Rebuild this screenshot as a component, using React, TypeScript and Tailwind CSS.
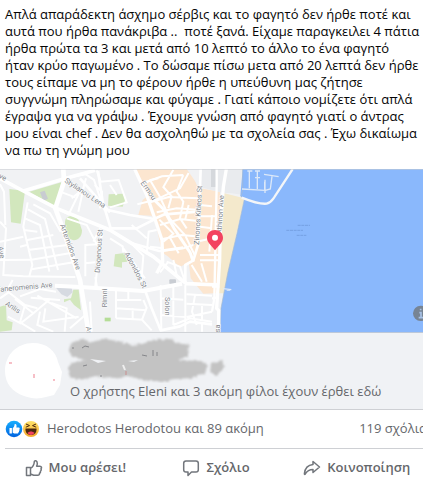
import type { ReactNode } from "react";

const reviewLines = [
    "Απλά απαράδεκτη άσχημο σέρβις και το φαγητό δεν ήρθε ποτέ και",
    "αυτά που ήρθα πανάκριβα ..  ποτέ ξανά. Είχαμε παραγκειλει 4 πάτια",
    "ήρθα πρώτα τα 3 και μετά από 10 λεπτό το άλλο το ένα φαγητό",
    "ήταν κρύο παγωμένο . Το δώσαμε πίσω μετα από 20 λεπτά δεν ήρθε",
    "τους είπαμε να μη το φέρουν ήρθε η υπεύθυνη μας ζήτησε",
    "συγγνώμη πληρώσαμε και φύγαμε . Γιατί κάποιο νομίζετε ότι απλά",
    "έγραψα για να γράψω . Έχουμε γνώση από φαγητό γιατί ο άντρας",
    "μου είναι chef . Δεν θα ασχοληθώ με τα σχολεία σας . Έχω δικαίωμα",
    "να πω τη γνώμη μου",
];

function StreetMap() {
    return (
        <svg viewBox="0 12 1269 492" className="block w-full" role="img" aria-label="Map">
            <rect y="12" width="1269" height="492" fill="#f1f2f4" />

            {/* town centre */}
            <g fill="#fce6d0">
                <path d="M400 12H560L600 70L660 80V384L610 386L572 340L566 292L540 306L505 275L486 262L478 225L468 180L455 152L415 150L428 105L440 95L425 45Z" />
            </g>
            <path d="M560 12H598V80L575 20Z" fill="#f1f2f4" />
            <path d="M600 12H730V90L690 84H670L600 66Z" fill="#e9ebee" />
            <path d="M633 12H648V66H633Z" fill="#d5d8dc" />

            {/* parks */}
            <g fill="#d2e7bd">
                <path d="M28 72L75 78L62 176L33 172Z" />
                <path d="M88 80L184 52L168 126Z" />
                <path d="M195 172C195 150 222 148 236 166L246 196C246 224 222 232 207 220C196 208 195 190 195 172Z" />
                <path d="M326 88L369 86L376 103L368 125L324 122Z" />
                <path d="M345 268L374 264L382 290L366 292V308L341 304Z" />
                <path d="M220 374H236L243 436L222 420L210 404L192 412V403L213 400Z" />
                <path d="M0 425L18 419L20 466L38 472L35 496L0 500Z" />
                <path d="M314 458H332V469H314Z" fill="#b5dd97" />
            </g>
            <g fill="#d6dae1">
                <path d="M168 368L214 365L218 382L202 396L184 388Z" />
                <rect x="508" y="343" width="20" height="14" rx="3" fill="#c9cdd3" />
                <path d="M120 82L134 77L144 101L130 108Z" fill="#c8ccd1" />
            </g>

            {/* side streets */}
            <g fill="none" stroke="#fff" strokeWidth="6">
                <path d="M83 112L70 185L97 300L88 334M100 118L150 145L182 200M84 133L135 162L174 315M75 160L120 180L148 320M72 195L112 200M78 226L160 210M84 255L202 240M90 285L208 265M95 313L220 292M60 245L80 240M0 170L18 190L10 330L70 334L226 336" />
                <path d="M0 58L12 80L16 180M0 230L70 215M0 285L92 284M38 345L20 378M0 400L26 382L75 420L112 430M60 394L120 372L168 380M45 402L100 445L62 475L24 455M75 420L60 472L106 500M112 392L230 460M100 445L148 404M120 440L112 480L160 500M136 430L130 470L236 455M154 414L200 430L194 500M92 398L180 405M210 490L256 450" />
                <path d="M190 40L258 28L282 45L310 128M215 100L250 72L235 140M170 130L206 148L240 78M258 40L244 90M186 82L226 97M290 16L302 50L356 45L380 112L330 127M330 60L350 90M284 60L306 80L300 130" />
                <path d="M256 334V240L294 238M256 295L286 292M200 160L260 180L290 238L308 210M330 220L368 244L370 262M400 242L430 272L424 350M440 268L446 200L470 195M450 245L490 250M370 250L435 340M300 190L280 230" />
                <path d="M348 376V460M348 405H424M348 430L440 436M348 460L430 464M430 405L440 428L426 464L455 496M385 376V405M398 430V462M292 374L286 336M270 410L275 500M482 360L484 496M520 358V480M556 360V500M484 400L550 404M484 450L556 456M560 388L636 392M560 416L636 420M560 456L636 440M585 392L576 440L590 480M606 420V500M520 480L570 460L636 470" />
                <path d="M395 180L440 220M440 52L452 45L475 40M500 290L540 305L555 350M505 290L480 322M520 285L530 330" />
            </g>

            {/* streets of the centre */}
            <g fill="none" stroke="#fff" strokeWidth="6">
                <path d="M430 54L486 34L550 30M412 118L468 104L540 70L566 24M450 112L506 96L594 100M470 142L530 130L590 134M480 180L540 162L594 168M488 222L545 210L585 214M450 45L480 96L510 162L555 210L584 270M520 14L490 66L515 94L505 130M550 30L530 80L550 110L540 160L560 190M566 120L556 162M478 164L520 206L490 230M486 258L550 250L580 240M510 218L536 265M600 185L636 190M600 154H650M600 120L636 124M600 270H660M600 286H660M575 300L606 350M636 150L628 260M600 228L636 220M604 295L620 350" />
            </g>

            {/* main roads */}
            <g fill="none" stroke="#fff" strokeLinejoin="round">
                <path d="M0 40L70 78L170 130L330 195L395 235L460 275L545 345L560 356L660 360" strokeWidth="11" />
                <path d="M70 78L190 42L285 16" strokeWidth="11" />
                <path d="M190 12L192 50L166 130L188 190L240 345L266 504" strokeWidth="14" />
                <path d="M165 362L240 366L430 378L546 356" strokeWidth="12" />
                <path d="M294 18L308 110L332 190M310 132L390 150L462 162L494 148L594 140M240 40L330 142M330 190H410L462 164" strokeWidth="8" />
                <path d="M404 12L440 90L464 160L486 225L488 290L470 325" strokeWidth="10" />
                <path d="M440 82L490 132L522 190L570 262L580 290" strokeWidth="9" />
                <path d="M395 235L478 258L550 248" strokeWidth="8" />
                <path d="M435 376L455 430L482 496L540 484L570 470L636 478M556 356V300L580 286L594 240L602 12" strokeWidth="8" />
                <path d="M285 370L300 236" strokeWidth="6" />
            </g>

            {/* beach and sea */}
            <path d="M670 84L733 100L708 210L675 385H655Z" fill="#f4e9cc" />
            <path d="M728 12H1269V504H660L663 430L683 325L711 205L733 103L721 93Z" fill="#8ab8fc" />
            <path d="M728 12V76L723 94L733 103L711 205L683 325L663 430L660 504" fill="none" stroke="#a7bbce" strokeWidth="2" />
            <path d="M679 12L670 66L661 180L659 285L650 430L656 436V504" fill="none" stroke="#fff" strokeWidth="10" />
            <path d="M650 12V60L643 400L636 440M636 365H658M636 400L652 398" fill="none" stroke="#fff" strokeWidth="7" />
            <path d="M725 98C755 110 780 118 800 116C814 112 816 106 824 95L878 12" fill="none" stroke="#f4f6f8" strokeWidth="7" />
            <g fill="none" stroke="#dce8f8" strokeWidth="4">
                <path d="M726 72L794 76V50M748 18V70M742 18H757M772 16V72M765 18H780M765 38H780M792 28L836 35M816 34L811 72L796 76M795 44V84" />
                <path d="M669 371L694 374M680 375H690" />
            </g>
            <g stroke="#75a0e2" strokeWidth="3" strokeDasharray="9 2">
                <path d="M893 181H930M859 196H909M890 211H919" />
            </g>

            <g fill="#84888d" fontFamily="Roboto, sans-serif" fontSize="22" stroke="#fff" strokeWidth="3" paintOrder="stroke">
                <text transform="translate(192 50) rotate(34)">Stylianou Lena</text>
                <text transform="translate(421 54) rotate(55)">Ermou</text>
                <text transform="translate(180 181) rotate(70)">Artemidos Ave</text>
                <text transform="translate(299 324) rotate(-86)">Diogenous St</text>
                <text transform="translate(373 266) rotate(62)">Adonidos St</text>
                <text transform="translate(597 240) rotate(-87)">Zinonos Kitieos St</text>
                <text transform="translate(-10 381) rotate(-5)">Faneromenis Ave</text>
                <text transform="translate(14 420) rotate(32)">Arilis</text>
                <text transform="translate(320 427) rotate(-90)">Rimni</text>
                <text transform="translate(494 396) rotate(90)">Solon</text>
                <text transform="translate(664 208) rotate(-86)">Athinon Ave</text>
                <text transform="translate(257 486) rotate(80)">Ar</text>
                <text transform="translate(-17 31) rotate(28)">Ave</text>
                <text transform="translate(-6 245) rotate(80)">Ave</text>
                <text transform="translate(659 514) rotate(-90)">usa</text>
            </g>

            {/* pin */}
            <path d="M645 256C636 243 621 233 621 219C621 204 631 195 645 195C659 195 669 204 669 219C669 233 654 243 645 256Z" fill="#f3425f" />
            <circle cx="645" cy="218" r="9" fill="#fff" />

            <circle cx="1262" cy="445" r="23" fill="#778494" />
            <path d="M1262 431v5M1258 443h5v15M1256 458h13" fill="none" stroke="#a8c2e6" strokeWidth="5" />
            <path d="M0 12.500H1269M0 502.500H1269" stroke="#c9ccd1" strokeWidth="3" opacity=".8" />
        </svg>
    );
}

function HiddenName() {
    return (
        <svg width="164" height="46" viewBox="0 0 164 46" className="block" aria-hidden="true">
            <filter id="rough" x="-10%" y="-10%" width="120%" height="120%">
                <feTurbulence type="fractalNoise" baseFrequency=".25" numOctaves="2" seed="4" result="noise" />
                <feDisplacementMap in="SourceGraphic" in2="noise" scale="4" xChannelSelector="R" yChannelSelector="G" />
                <feGaussianBlur stdDeviation=".9" />
            </filter>
            <g fill="#c3c3c3" filter="url(#rough)">
                <path d="M5 6L16 2L26 5L38 2L52 4L66 8L76 7L88 3L104 2L112 6L124 8L121 14L123 19L112 23L134 24L142 28L139 36L126 41L108 42L96 45L76 43L62 39L46 41L30 39L14 43L4 40L2 32L5 26L20 23L6 20L3 13Z" />
                <path d="M145 27L156 23L158 31L150 39L144 35Z" />
            </g>
            <path d="M24 22L40 24L32 26ZM62 24L72 23L68 25Z" fill="#f0f2f5" />
            <g fill="none" stroke="#85868a" strokeWidth="1">
                <path d="M6 11h2M16 11l3-2l4 1M76 18l5 1M87 13v6M91 15v4M17 29l4-1M34 39h2" />
                <path d="M57 28l2 5" stroke="#eee" strokeWidth="2" />
                <path d="M60 34v4" stroke="#c98f8f" />
            </g>
        </svg>
    );
}

function Reactions() {
    return (
        <svg width="34" height="18" viewBox="0 0 34 18" className="shrink-0" aria-hidden="true">
            <defs>
                <linearGradient id="like" x2="0" y2="1">
                    <stop stopColor="#18afff" />
                    <stop offset="1" stopColor="#0062df" />
                </linearGradient>
                <linearGradient id="haha" x2="0" y2="1">
                    <stop stopColor="#ffe36a" />
                    <stop offset="1" stopColor="#f5a72c" />
                </linearGradient>
            </defs>
            <circle cx="26" cy="9" r="8" fill="url(#haha)" />
            <path d="M21 4l3.500 1.600L20.800 7.200M31 4l-3.500 1.600L31.200 7.200" fill="none" stroke="#4b280e" strokeWidth="1" />
            <path d="M20.500 8.500h11c.5 3.800-2 6.500-5.500 6.500s-6-2.700-5.500-6.500z" fill="#4b280e" />
            <path d="M22.500 13c2-2 5-2 7 0c-1.700 2.500-5.300 2.500-7 0z" fill="#f3425f" />
            <circle cx="9" cy="9" r="9" fill="#fff" />
            <circle cx="9" cy="9" r="8.300" fill="url(#like)" />
            <path d="M4.500 8h2.400v5.500H4.500zM7.700 8.300c1-.9 1.800-2.100 1.900-4.100c1.600-.6 2.500 1.300 1.700 3.300h2.500c1 0 1.200 1.200.5 1.700c.5.600.3 1.300-.3 1.700c.2.700-.1 1.200-.6 1.400c0 .8-.4 1.200-1.200 1.200H9.200l-1.500-.7z" fill="#fff" />
        </svg>
    );
}

function ActionButton({ label, children }: { label: string; children: ReactNode }) {
    return (
        <button type="button" className="flex flex-1 items-center justify-center gap-[6px] font-semibold whitespace-nowrap">
            <svg width="18" height="18" viewBox="0 0 18 18" fill="none" stroke="#72767c" strokeWidth="1.5" strokeLinejoin="round" strokeLinecap="round" className="shrink-0" aria-hidden="true">
                {children}
            </svg>
            {label}
        </button>
    );
}

export default function App() {
    return (
        <article className="overflow-hidden bg-white font-['Open_Sans','Noto_Sans',sans-serif] text-[13px] text-[#65676b]">
            <p className="px-[5px] pt-[6px] pb-[10px] leading-[17px] text-[#050505]">
                {reviewLines.map((line) => (
                    <span key={line} className="block whitespace-pre">{line}</span>
                ))}
            </p>

            <StreetMap />

            <div className="flex gap-1 border-b border-[#ced0d4] bg-[#f0f2f5] pt-1 pb-[10px] pl-1">
                <svg width="58" height="58" viewBox="0 0 58 58" className="mt-1 shrink-0" aria-hidden="true">
                    <path d="M29 2C43 2 52 10 54 21L58 31L56 44L50 54L42 56C35 58 28 58 20 55C8 51 1 42 1 30C1 14 13 2 29 2Z" fill="#fff" />
                    <path d="M5 22h3M30 33v4M50 38v2" stroke="#f4aab5" strokeWidth="1.500" />
                </svg>
                <div>
                    <HiddenName />
                    <div className="pl-1 leading-4 whitespace-nowrap">Ο χρήστης Eleni και 3 ακόμη φίλοι έχουν έρθει εδώ</div>
                </div>
            </div>

            <footer className="-mr-1 pl-[5px]">
                <div className="flex h-[39px] items-center justify-between border-b border-[#ced0d4] whitespace-nowrap">
                    <div className="flex items-center gap-2">
                        <Reactions />
                        <span>Herodotos Herodotou και 89 ακόμη</span>
                    </div>
                    <span>119 σχόλια</span>
                </div>
                <div className="flex h-[37px]">
                    <ActionButton label="Μου αρέσει!">
                        <path d="M1.500 8.500h4v8h-4zM5.500 9.500c2.200-1.500 3.600-3.600 3.800-6.800C9.500 1 12.300 1.500 12.300 4.400c0 1-.3 2-.7 2.800h3.300c1.800 0 2.100 1.800 1 2.600c.7.900.3 1.900-.5 2.300c.4 1-.1 1.800-.9 2.100c.1 1.300-.6 2-1.700 2H8.700L5.500 15" />
                    </ActionButton>
                    <ActionButton label="Σχόλιο">
                        <path d="M4 2h10c1.400 0 2.300.9 2.300 2.300v6.400c0 1.400-.9 2.300-2.300 2.300H9.500L6 16.500V13H4c-1.400 0-2.300-.9-2.300-2.300V4.300C1.700 2.900 2.600 2 4 2z" />
                    </ActionButton>
                    <ActionButton label="Κοινοποίηση">
                        <path d="M10 2.500l6.500 5.500L10 13.500V10.500c-4 0-6 1.500-7.700 4.500c-.5.700-1 .4-.9-.4C2 9 4.500 6 10 5.500z" />
                    </ActionButton>
                </div>
            </footer>
        </article>
    );
}
